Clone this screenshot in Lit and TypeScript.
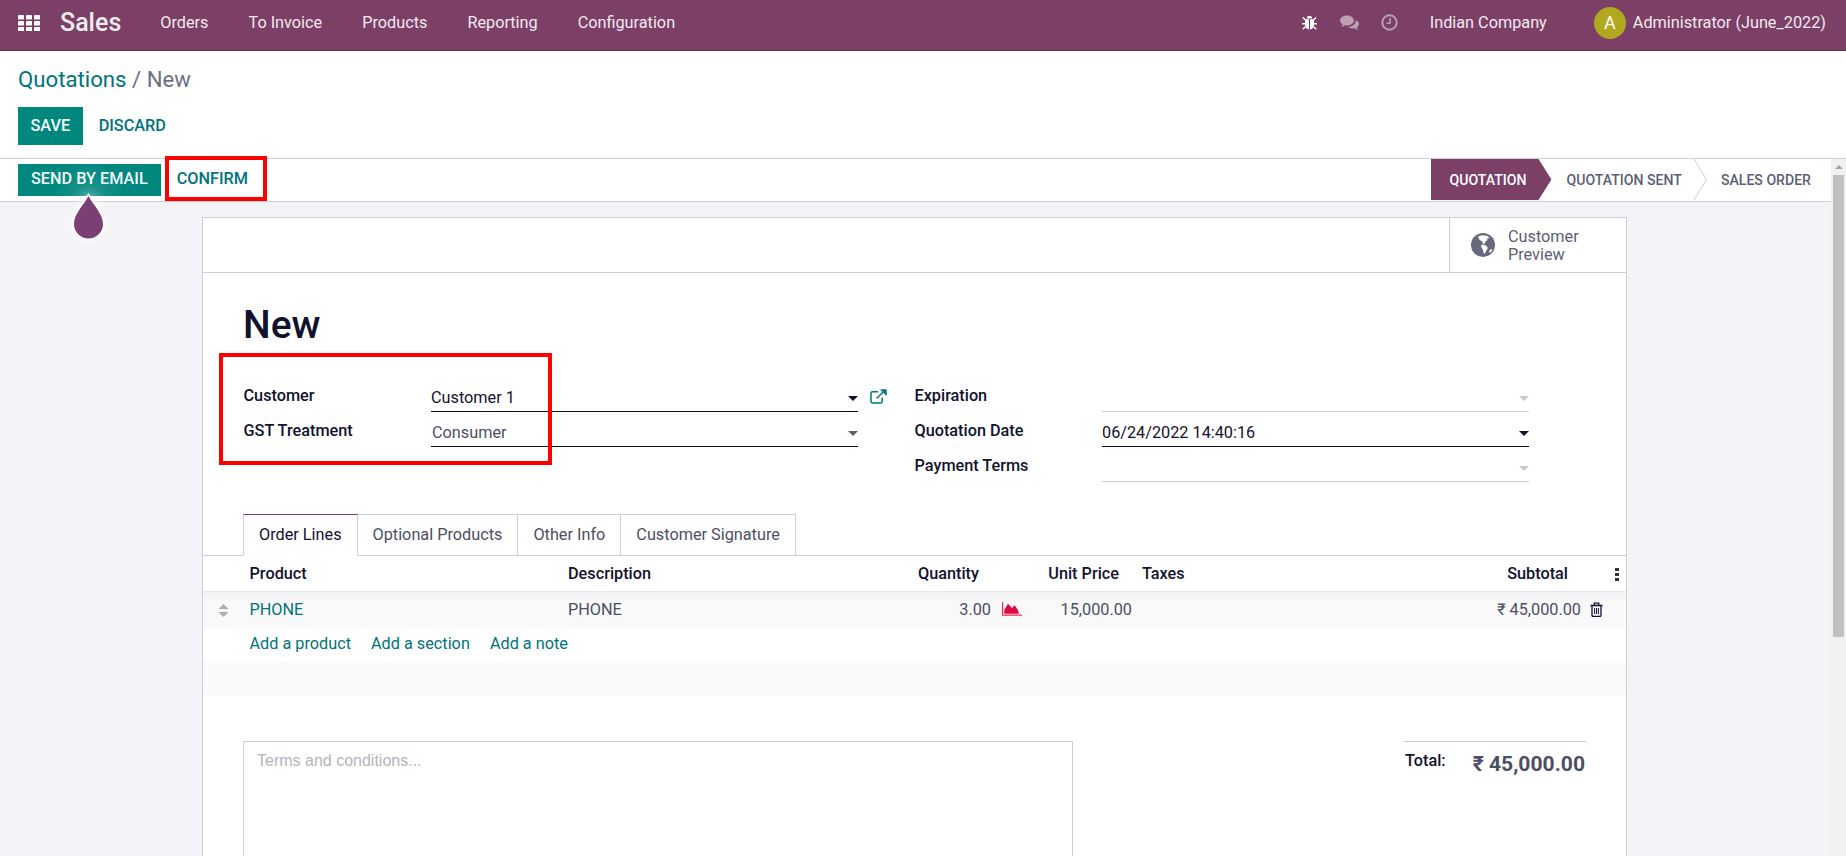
import { LitElement, html, svg, css } from 'lit'
import { customElement } from 'lit/decorators.js'

const menus = ['Orders', 'To Invoice', 'Products', 'Reporting', 'Configuration']
const tabs = ['Order Lines', 'Optional Products', 'Other Info', 'Customer Signature']

const caret = (cls = '') => html`<span class="caret ${cls}"></span>`

@customElement('app-root')
export class AppRoot extends LitElement {
    static styles = css`
        :host {
            display: block;
            position: relative;
            height: 856px;
            overflow: hidden;
            background: #fff;
            color: #12122e;
            font-family: Roboto, 'Noto Sans', sans-serif;
            font-size: 16.25px;
            line-height: 20px;
        }

        /* top bar */
        .nav {
            display: flex;
            align-items: center;
            height: 45px;
            padding: 0 20px 5px 18px;
            background: #7c3f66;
            border-bottom: 1px solid #5d2f4d;
            color: #fff;
        }
        .apps { display: block; width: 22px; height: 16px; }
        .brand { margin: 0 19px 0 20px; font-size: 25px; font-weight: 500; color: #f4ecf1; }
        .menu { padding: 0 20px; color: #f2e9ef; }
        .systray { display: flex; align-items: center; margin-left: auto; }
        .systray svg { display: block; }
        .bug { margin-right: 23px; }
        .chat { margin-right: 22px; }
        .clock { margin-right: 32px; }
        .company { margin-right: 47px; color: #f2e9ef; }
        .avatar {
            display: flex;
            align-items: center;
            justify-content: center;
            width: 32px;
            height: 32px;
            margin-right: 7px;
            border-radius: 50%;
            background: #b0a81f;
            font-size: 18px;
        }
        .user { color: #f2e9ef; }

        /* breadcrumb + save */
        .control {
            height: 108px;
            box-sizing: border-box;
            padding: 15px 18px 0;
            border-bottom: 1px solid #cfcfd4;
        }
        .crumb { font-size: 22.2px; line-height: 26px; color: #6b6f82; }
        .crumb b { font-weight: 400; color: #00747a; }
        .actions { display: flex; align-items: center; margin-top: 15px; }
        .btn {
            display: flex;
            align-items: center;
            font-weight: 500;
            white-space: nowrap;
            color: #00747a;
        }
        .primary { background: #00887f; color: #f4fbfa; }
        .save { height: 38px; padding: 0 12.5px; }
        .discard { margin-left: 16px; }

        .body { display: flex; height: 697px; }
        .main { flex: 1; min-width: 0; background: #f4f4f8; overflow: hidden; }

        /* status row */
        .status {
            display: flex;
            height: 43px;
            box-sizing: border-box;
            padding-left: 18px;
            background: #fff;
            border-bottom: 1px solid #cfcfd4;
        }
        .send {
            height: 32px;
            box-sizing: border-box;
            margin-top: 5px;
            padding: 0 13px 2px;
            background: radial-gradient(circle at 50% 110%, #26978f 0, #00887f 45%);
        }
        .confirm { height: 32px; box-sizing: border-box; margin: 5px 0 0 16px; padding-bottom: 2px; }
        .stages {
            display: flex;
            align-items: center;
            margin-left: auto;
            padding-right: 20px;
            height: 41px;
            font-weight: 500;
            font-size: 14.1px;
            color: #5c6072;
        }
        .stage-on {
            display: flex;
            align-items: center;
            height: 41px;
            padding: 0 25px 0 18.5px;
            margin-right: 15px;
            background: #7c3f66;
            color: #fff;
            clip-path: polygon(0 0, calc(100% - 13px) 0, 100% 50%, calc(100% - 13px) 100%, 0 100%);
        }
        .chev { display: block; margin: 0 14px 0 12px; }

        /* sheet */
        .sheet {
            width: 1423px;
            height: 800px;
            margin: 15px 0 0 202px;
            background: #fff;
            border: 1px solid #cfcfd6;
        }
        .box {
            display: flex;
            justify-content: flex-end;
            height: 54px;
            border-bottom: 1px solid #cfcfd6;
        }
        .preview {
            display: flex;
            align-items: center;
            gap: 13px;
            width: 177px;
            box-sizing: border-box;
            padding-left: 21px;
            border-left: 1px solid #cfcfd6;
            line-height: 18.5px;
            color: #5c6072;
        }
        .preview span { padding-top: 2px; }
        h1 {
            margin: 30px 0 30px 40px;
            font-size: 39px;
            line-height: 44px;
            font-weight: 500;
            color: #12122e;
        }
        .form { display: flex; padding-left: 40.5px; }
        .col-l { width: 671px; }
        .field { display: flex; height: 35px; }
        .label { width: 187.5px; padding-top: 9px; font-weight: 500; }
        .input {
            display: flex;
            justify-content: space-between;
            width: 427px;
            height: 35px;
            box-sizing: border-box;
            padding-top: 11px;
            border-bottom: 1px solid #0c0c24;
        }
        .input.empty { border-bottom-color: #cfcfd4; }
        .input.dim { color: #4c4f63; padding-left: 1px; }
        .caret {
            width: 0;
            height: 0;
            margin-top: 8px;
            border: 5px solid transparent;
            border-top-color: #12122e;
            border-bottom: 0;
        }
        .caret.mid { border-top-color: #5c6072; }
        .caret.faint { border-top-color: #c9c9ce; }
        .ext { display: block; margin: 12px 0 0 12px; }

        /* tabs */
        .tabs {
            display: flex;
            height: 42px;
            box-sizing: border-box;
            margin-top: 32px;
            padding-left: 40px;
            border-bottom: 1px solid #cfcfd6;
        }
        .tab {
            height: 42px;
            box-sizing: border-box;
            padding: 10px 15px 0;
            border: 1px solid #cfcfd6;
            border-left: 0;
            color: #4c4f63;
        }
        .tab.on {
            border-left: 1px solid #cfcfd6;
            border-top-color: #7c3f66;
            border-bottom-color: #fff;
            color: #12122e;
        }

        /* order lines */
        .grid {
            display: grid;
            grid-template-columns: 46.5px 318.5px 300px 123px 50px 91px 268px 181px 45px;
            align-items: center;
        }
        .head {
            height: 36px;
            box-sizing: border-box;
            border-bottom: 1px solid #e6e6e8;
            font-weight: 500;
        }
        .row {
            height: 36px;
            background: linear-gradient(#f2f2f4, #f9f9fa 10px);
            color: #4c4f63;
        }
        .r { text-align: right; }
        .pad { padding-right: 12px; }
        .pad-more { padding-right: 13px; }
        .taxes { padding-left: 10px; }
        .teal { color: #00747a; }
        .handle { display: block; margin-left: 15px; }
        .dots { display: block; margin-left: 34px; }
        .chart { display: block; margin: 0 0 2px 11px; }
        .trash { display: block; margin: 0 0 2px 9px; }
        .adds {
            display: flex;
            gap: 20px;
            height: 33px;
            box-sizing: border-box;
            align-items: center;
            padding: 0 0 2px 46.5px;
            color: #00747a;
        }
        .band { height: 34px; background: #fafafa; }
        .bottom { display: flex; padding: 46px 40px 0 40px; }
        .terms {
            width: 830px;
            height: 200px;
            box-sizing: border-box;
            padding: 9px 13px;
            border: 1px solid #cfcfd6;
            font-family: 'Liberation Sans', Arial, sans-serif;
            font-size: 16px;
            color: #b4b4ba;
        }
        .totals {
            display: flex;
            justify-content: space-between;
            width: 183px;
            height: 40px;
            box-sizing: border-box;
            margin-left: auto;
            padding: 9px 1px 0 2px;
            border-top: 1px solid #cfcfd4;
        }
        .totals b { font-weight: 500; }
        .amount { font-size: 21.1px; font-weight: 700; line-height: 26px; color: #4c4f63; }

        /* scrollbar */
        .scroll { width: 15px; background: #f1f1f1; }
        .up {
            width: 0;
            height: 0;
            margin: 6px auto 6px;
            border: 4px solid transparent;
            border-bottom: 4px solid #a3a3a3;
            border-top: 0;
        }
        .thumb { height: 462px; margin: 0 2px; background: #c1c1c1; }

        /* overlays drawn on top of the page */
        .mark {
            position: absolute;
            box-sizing: border-box;
            border: 4px solid #f00;
            pointer-events: none;
        }
        .mark-confirm { left: 165px; top: 156px; width: 102px; height: 45px; }
        .mark-form { left: 219px; top: 353px; width: 333px; height: 112px; }
        .drop {
            position: absolute;
            left: 70px;
            top: 193px;
            display: block;
            filter: drop-shadow(0 0 6px rgba(255, 255, 255, 0.8));
        }
    `

    render() {
        return html`
            <div class="nav">
                <svg class="apps" viewBox="0 0 22 16" fill="#fff">
                    ${[0, 8, 16].map(x => [0, 6, 12].map(y => svg`<rect x=${x} y=${y} width="6" height="4.4" rx=".4"></rect>`))}
                </svg>
                <span class="brand">Sales</span>
                ${menus.map(m => html`<span class="menu">${m}</span>`)}
                <div class="systray">
                    <svg class="bug" width="15" height="15" viewBox="0 0 15 15" fill="#fff">
                        <path d="M4.800 3.400a2.700 2.700 0 0 1 5.400 0z"></path>
                        <path d="M3 4.200h4v10.300C4.600 14.200 3 12.300 3 9.800zM8 4.200h4v5.600c0 2.500-1.600 4.400-4 4.700z"></path>
                        <path d="M.8 2.500L3.500 5M14.200 2.500L11.500 5M0 8.700h3.200M15 8.700h-3.200M.8 14.200l2.700-2.500M14.200 14.200l-2.700-2.500" stroke="#fff" stroke-width="1.500"></path>
                    </svg>
                    <svg class="chat" width="19" height="16" viewBox="0 0 19 16" fill="#bd9fb4">
                        <path d="M7 .5c3.800 0 6.900 2.200 6.900 5s-3.100 5-6.900 5c-.7 0-1.400-.1-2-.2-1 .8-2.300 1.400-3.800 1.600.7-.8 1.200-1.700 1.400-2.700C1 8.300 0 7 0 5.500 0 2.700 3.100.5 7 .5z"></path>
                        <path d="M15 4.800c2.300.7 4 2.300 4 4.200 0 1.300-.8 2.500-2 3.300.2.900.7 1.800 1.300 2.500-1.300-.2-2.500-.7-3.400-1.500-.6.100-1.200.2-1.900.2-2 0-3.700-.7-4.800-1.700 4.100-.1 7.500-2.600 7.500-5.800 0-.4-.1-.8-.7-1.200z"></path>
                    </svg>
                    <svg class="clock" width="17" height="17" viewBox="0 0 17 17" fill="none" stroke="#bd9fb4">
                        <circle cx="8.500" cy="8.500" r="7.200" stroke-width="2"></circle>
                        <path d="M9 4v5.200H5.500" stroke-width="1.600"></path>
                    </svg>
                    <span class="company">Indian Company</span>
                    <span class="avatar">A</span>
                    <span class="user">Administrator (June_2022)</span>
                </div>
            </div>

            <div class="control">
                <div class="crumb"><b>Quotations</b> / New</div>
                <div class="actions">
                    <span class="btn primary save">SAVE</span>
                    <span class="btn discard">DISCARD</span>
                </div>
            </div>

            <div class="body">
                <div class="main">
                    <div class="status">
                        <span class="btn primary send">SEND BY EMAIL</span>
                        <span class="btn confirm">CONFIRM</span>
                        <div class="stages">
                            <span class="stage-on">QUOTATION</span>
                            <span>QUOTATION SENT</span>
                            <svg class="chev" width="13" height="41" viewBox="0 0 13 41" fill="none" stroke="#cfcfd4">
                                <path d="M0 0l12.500 20.500L0 41"></path>
                            </svg>
                            <span>SALES ORDER</span>
                        </div>
                    </div>

                    <div class="sheet">
                        <div class="box">
                            <div class="preview">
                                <svg width="24" height="24" viewBox="0 0 24 24">
                                    <circle cx="12" cy="12" r="12" fill="#666a7c"></circle>
                                    <path fill="#fff" d="M7 3.500l4-1.300 5 .6 2.500 2-2 .8-.8 2.400-1.700.7-.4 2.300-1.600-.6-1-2.200-2.400-1.100-1-2.200zM10.500 11.500l3.500.6 2.300 1.600.3 2-1.600 2.600-1.400 2.500-1.200-.8-.4-3.300-1.800-2.400zM18.500 17l2.700-1-.8 2.800-2 1.200z"></path>
                                </svg>
                                <span>Customer<br />Preview</span>
                            </div>
                        </div>

                        <h1>New</h1>

                        <div class="form">
                            <div class="col-l">
                                <div class="field">
                                    <span class="label">Customer</span>
                                    <span class="input">Customer 1${caret()}</span>
                                    <svg class="ext" width="17" height="15" viewBox="0 0 17 15" fill="none" stroke="#00787e" stroke-width="1.500">
                                        <path d="M8 2.800H2.500A1.500 1.500 0 0 0 1 4.300v8.200A1.500 1.500 0 0 0 2.500 14h8.200a1.500 1.500 0 0 0 1.500-1.500V8.500"></path>
                                        <path d="M6.500 9.500L15 1.200"></path>
                                        <path d="M10.500 .8h5.700v5.700" fill="#00787e" stroke-width="1"></path>
                                    </svg>
                                </div>
                                <div class="field">
                                    <span class="label">GST Treatment</span>
                                    <span class="input dim">Consumer${caret('mid')}</span>
                                </div>
                            </div>
                            <div>
                                <div class="field">
                                    <span class="label">Expiration</span>
                                    <span class="input empty"><span></span>${caret('faint')}</span>
                                </div>
                                <div class="field">
                                    <span class="label">Quotation Date</span>
                                    <span class="input">06/24/2022 14:40:16${caret()}</span>
                                </div>
                                <div class="field">
                                    <span class="label">Payment Terms</span>
                                    <span class="input empty"><span></span>${caret('faint')}</span>
                                </div>
                            </div>
                        </div>

                        <div class="tabs">
                            ${tabs.map((t, i) => html`<span class="tab ${i === 0 ? 'on' : ''}">${t}</span>`)}
                        </div>

                        <div class="grid head">
                            <span></span>
                            <span>Product</span>
                            <span>Description</span>
                            <span class="r pad">Quantity</span>
                            <span></span>
                            <span class="r pad-more">Unit Price</span>
                            <span class="taxes">Taxes</span>
                            <span class="r pad-more">Subtotal</span>
                            <svg class="dots" width="4" height="14" viewBox="0 0 4 14" fill="#333">
                                <rect y="1" width="4" height="3"></rect>
                                <rect y="6" width="4" height="3"></rect>
                                <rect y="11" width="4" height="3"></rect>
                            </svg>
                        </div>

                        <div class="grid row">
                            <svg class="handle" width="11" height="13" viewBox="0 0 11 13" fill="#a9acb8">
                                <path d="M5.500 0l5 5H.5zM5.500 13l-5-5h10z"></path>
                            </svg>
                            <span class="teal">PHONE</span>
                            <span>PHONE</span>
                            <span class="r">3.00</span>
                            <svg class="chart" width="20" height="14" viewBox="0 0 20 14">
                                <path fill="#dc0a40" d="M2.300 11.700V8L6 1.700 10 6l2.700-2.700L16 8.300l1 3.400z"></path>
                                <path fill="none" stroke="#ee2a5a" stroke-width="1.200" d="M.6 0v13.200H20"></path>
                            </svg>
                            <span class="r">15,000.00</span>
                            <span></span>
                            <span class="r">₹ 45,000.00</span>
                            <svg class="trash" width="13" height="15" viewBox="0 0 13 15" fill="none" stroke="#12123c" stroke-width="1.300">
                                <path d="M.5 3.500h12M4.300 3.300V1.200h4.400v2.100M2 3.500v9.800c0 .7.500 1.100 1.100 1.100h6.800c.6 0 1.100-.4 1.100-1.100V3.500"></path>
                                <path d="M4.600 6v6M6.500 6v6M8.400 6v6" stroke-width="1"></path>
                            </svg>
                        </div>

                        <div class="adds">
                            <span>Add a product</span>
                            <span>Add a section</span>
                            <span>Add a note</span>
                        </div>
                        <div class="band"></div>

                        <div class="bottom">
                            <div class="terms">Terms and conditions...</div>
                            <div class="totals">
                                <b>Total:</b>
                                <span class="amount">₹ 45,000.00</span>
                            </div>
                        </div>
                    </div>
                </div>
                <div class="scroll">
                    <div class="up"></div>
                    <div class="thumb"></div>
                </div>
            </div>

            <div class="mark mark-confirm"></div>
            <div class="mark mark-form"></div>
            <svg class="drop" width="37" height="50" viewBox="0 0 37 50">
                <path d="M18.500 3C24 13 33 21 33 31a14.500 14.500 0 0 1-29 0C4 21 13 13 18.500 3z" fill="#7c3f74" stroke="#fff" stroke-width="3" paint-order="stroke"></path>
            </svg>
        `
    }
}
